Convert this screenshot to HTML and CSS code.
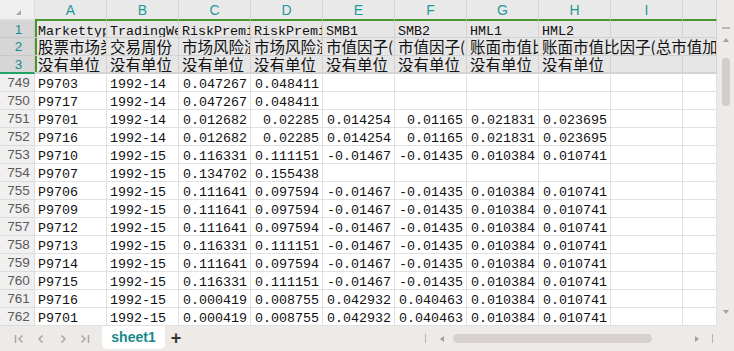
FILE: index.html
```html
<!doctype html>
<html>

<head>
    <title>sheet1</title>
    <meta charset="utf-8">
    <link rel="stylesheet" href="styles.css">
</head>

<body>
    <div class="app">
        <div class="main">
            <div class="sheet" id="sheet"></div>
            <div class="vscroll">
                <span class="vs-line"></span>
                <span class="vs-up"></span>
                <span class="vs-thumb"></span>
                <span class="vs-down"></span>
            </div>
        </div>
        <div class="tabbar">
            <div class="nav">
                <span class="nav-btn">
                    <svg width="12" height="12" viewBox="0 0 12 12"><path d="M2.5 2v8M9.5 2.5 6 6l3.5 3.5" fill="none" stroke="#a9a9a9" stroke-width="1.6"/></svg>
                </span>
                <span class="nav-btn">
                    <svg width="12" height="12" viewBox="0 0 12 12"><path d="M7.5 2.5 4 6l3.5 3.5" fill="none" stroke="#a9a9a9" stroke-width="1.6"/></svg>
                </span>
                <span class="nav-btn">
                    <svg width="12" height="12" viewBox="0 0 12 12"><path d="M4.5 2.5 8 6l-3.5 3.5" fill="none" stroke="#a9a9a9" stroke-width="1.6"/></svg>
                </span>
                <span class="nav-btn">
                    <svg width="12" height="12" viewBox="0 0 12 12"><path d="M2.5 2.5 6 6l-3.5 3.5M9.5 2v8" fill="none" stroke="#a9a9a9" stroke-width="1.6"/></svg>
                </span>
            </div>
            <span class="tab">sheet1</span>
            <span class="add">+</span>
            <div class="hscroll">
                <span class="hs-bar"></span>
                <span class="hs-left"></span>
                <span class="hs-thumb"></span>
                <span class="hs-right"></span>
                <span class="hs-bar end"></span>
            </div>
        </div>
    </div>

    <script>

        'use strict';

        const Sheet = document.getElementById('sheet');
        const Letters = ['A', 'B', 'C', 'D', 'E', 'F', 'G', 'H', 'I', ''];

        const Head = [
            ['Markettype', 'TradingWeek', 'RiskPremium1', 'RiskPremium2', 'SMB1', 'SMB2', 'HML1', 'HML2', '', ''],
            ['股票市场类型', '交易周份', '市场风险溢价因子', '市场风险溢价因子', '市值因子(流通', '市值因子(总市', '账面市值比因子', '账面市值比因子(总市值加权)'],
            ['没有单位', '没有单位', '没有单位', '没有单位', '没有单位', '没有单位', '没有单位', '没有单位', '', '']
        ];

        const Rows = [
            [749, 'P9703', '1992-14', '0.047267', '0.048411'],
            [750, 'P9717', '1992-14', '0.047267', '0.048411'],
            [751, 'P9701', '1992-14', '0.012682', '0.02285', '0.014254', '0.01165', '0.021831', '0.023695'],
            [752, 'P9716', '1992-14', '0.012682', '0.02285', '0.014254', '0.01165', '0.021831', '0.023695'],
            [753, 'P9710', '1992-15', '0.116331', '0.111151', '-0.01467', '-0.01435', '0.010384', '0.010741'],
            [754, 'P9707', '1992-15', '0.134702', '0.155438'],
            [755, 'P9706', '1992-15', '0.111641', '0.097594', '-0.01467', '-0.01435', '0.010384', '0.010741'],
            [756, 'P9709', '1992-15', '0.111641', '0.097594', '-0.01467', '-0.01435', '0.010384', '0.010741'],
            [757, 'P9712', '1992-15', '0.111641', '0.097594', '-0.01467', '-0.01435', '0.010384', '0.010741'],
            [758, 'P9713', '1992-15', '0.116331', '0.111151', '-0.01467', '-0.01435', '0.010384', '0.010741'],
            [759, 'P9714', '1992-15', '0.111641', '0.097594', '-0.01467', '-0.01435', '0.010384', '0.010741'],
            [760, 'P9715', '1992-15', '0.116331', '0.111151', '-0.01467', '-0.01435', '0.010384', '0.010741'],
            [761, 'P9716', '1992-15', '0.000419', '0.008755', '0.042932', '0.040463', '0.010384', '0.010741'],
            [762, 'P9701', '1992-15', '0.000419', '0.008755', '0.042932', '0.040463', '0.010384', '0.010741']
        ];

        function cell(cls, text) {
            let el = document.createElement('DIV');
            el.className = cls;
            el.textContent = text;
            Sheet.appendChild(el);
            return el;
        }

        // column letters
        cell('corner', '');
        for (let l of Letters)
            cell('ch', l);

        // frozen header rows 1-3
        Head.forEach(function (r, i) {
            let base = 'c sel r' + (i + 1) + (i > 0 ? ' zh' : '');
            cell('rh sel r' + (i + 1), i + 1);
            r.forEach(function (t, j) {
                let cls = base + (j === 0 ? ' first' : '');
                if (i === 1 && j === 7)
                    cls += ' span3';
                cell(cls, t);
            });
        });

        // data rows
        for (let r of Rows) {
            cell('rh', r[0]);
            for (let j = 1; j <= 10; j++) {
                let v = r[j] === undefined ? '' : r[j];
                cell(j > 2 ? 'c num' : 'c', v);
            }
        }

    </script>
</body>

</html>
```

FILE: styles.css
```css
* {
    box-sizing: border-box;
}

body {
    margin: 0;
    background: #fff;
    font-family: "Liberation Mono", monospace;
}

.app {
    width: 734px;
    height: 351px;
    display: flex;
    flex-direction: column;
    overflow: hidden;
}

.main {
    display: flex;
    height: 326px;
}

.sheet {
    width: 717px;
    display: grid;
    grid-template-columns: 35px repeat(9, 72px) 34px;
    grid-template-rows: 21px 17px 18px 18px repeat(14, 18px);
    overflow: hidden;
}

.sheet > div {
    white-space: nowrap;
    overflow: hidden;
}

.corner {
    background: #efefef;
    border-right: 1px solid #dcdcdc;
    border-bottom: 2px solid #dcdcdc;
    position: relative;
}

.corner::after {
    content: "";
    position: absolute;
    left: 16px;
    top: 10px;
    border-style: solid;
    border-width: 0 0 5px 5px;
    border-color: transparent transparent #a8a8a8 transparent;
}

.ch {
    background: #e9e9e9;
    border-right: 1px solid #d6d6d6;
    border-bottom: 2px solid #4b962c;
    color: #1e9a9a;
    font-family: "Liberation Sans", sans-serif;
    font-size: 14px;
    text-align: center;
    line-height: 19px;
    padding-top: 1px;
}

.rh {
    background: #f0f0f0;
    border-right: 1px solid #dcdcdc;
    border-bottom: 1px solid #dcdcdc;
    color: #5a5a5a;
    font-family: "Liberation Sans", sans-serif;
    font-size: 13.5px;
    text-align: center;
    padding-left: 3px;
    line-height: 17px;
}

.rh.sel {
    background: #d6d6d6;
    color: #1a8c8c;
    border-color: #c8c8c8;
}

.c {
    border-right: 1px solid #e1e1e1;
    border-bottom: 1px solid #e1e1e1;
    color: #111;
    font-size: 13.33px;
    line-height: 17px;
    padding: 2px 3px 0 3px;
}

.c.num {
    text-align: right;
}

.c.sel {
    background: #e6e6e6;
    border-color: #d3d3d3;
}

.c.first {
    box-shadow: inset 2px 0 #4b962c;
}

.zh {
    font-family: "Noto Sans CJK SC", sans-serif;
    font-size: 15.5px;
    line-height: 17px;
    padding-top: 0;
}

.r3,
.rh.r3 {
    border-bottom: 2px solid #22a366;
}

.span3 {
    grid-column: span 3;
}

.vscroll {
    width: 17px;
    background: #eeeae8;
    display: flex;
    flex-direction: column;
    align-items: center;
}

.vs-line {
    width: 8px;
    height: 2px;
    background: #b8b8b8;
    margin-top: 27px;
}

.vs-up {
    margin-top: 9px;
    border-style: solid;
    border-width: 0 3px 4px 3px;
    border-color: transparent transparent #a0a0a0 transparent;
}

.vs-thumb {
    width: 8px;
    height: 48px;
    border-radius: 4px;
    background: #d3cecc;
    margin-top: 16px;
}

.vs-down {
    margin-top: auto;
    margin-bottom: 12px;
    border-style: solid;
    border-width: 4px 3px 0 3px;
    border-color: #a0a0a0 transparent transparent transparent;
}

.tabbar {
    flex: 1;
    background: #eeeae8;
    display: flex;
    align-items: center;
}

.nav {
    display: flex;
    margin-left: 8px;
}

.nav-btn {
    width: 22px;
    height: 14px;
    display: flex;
    align-items: center;
    justify-content: center;
}

.tab {
    align-self: flex-start;
    margin-left: 6px;
    width: 63px;
    height: 23px;
    background: #fff;
    border-radius: 0 0 5px 5px;
    color: #17898a;
    font-family: "Liberation Sans", sans-serif;
    font-weight: bold;
    font-size: 14px;
    text-align: center;
    line-height: 22px;
}

.add {
    width: 22px;
    text-align: center;
    font-family: "Liberation Sans", sans-serif;
    font-weight: bold;
    font-size: 18px;
    color: #333;
    margin-top: -1px;
}

.hscroll {
    margin-left: auto;
    width: 314px;
    display: flex;
    align-items: center;
}

.hs-bar {
    width: 1px;
    height: 9px;
    background: #b5b5b5;
    margin-left: 5px;
}

.hs-bar.end {
    margin-left: 13px;
}

.hs-left {
    margin-left: 14px;
    border-style: solid;
    border-width: 3px 4px 3px 0;
    border-color: transparent #a0a0a0 transparent transparent;
}

.hs-thumb {
    margin-left: 9px;
    width: 199px;
    height: 9px;
    border-radius: 5px;
    background: #d6d1cf;
}

.hs-right {
    margin-left: 43px;
    border-style: solid;
    border-width: 3px 0 3px 4px;
    border-color: transparent transparent transparent #a0a0a0;
}
```
